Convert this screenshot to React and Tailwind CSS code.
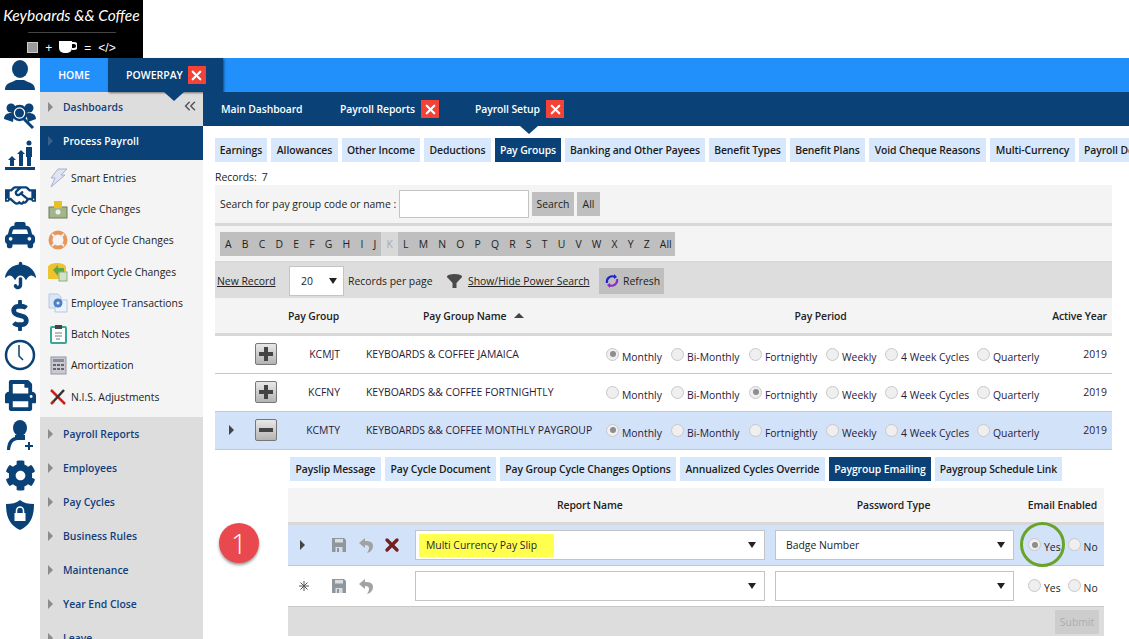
import { FaRegHandshake, FaTaxi, FaUmbrella, FaDollarSign, FaPrint, FaCog } from 'react-icons/fa';
import { X, ChevronsLeft } from 'lucide-react';

const NAVY = '#0a4277';

const railIcons = [
  <svg key="person" viewBox="0 0 30 30" className="w-[30px] h-[30px]" fill={NAVY}>
    <ellipse cx="15" cy="9" rx="8" ry="9" />
    <path d="M0 30c0-5 3-7 7-8l4-2h8l4 2c4 1 7 3 7 8z" />
  </svg>,
  <svg key="users" viewBox="0 0 32 30" className="w-[32px] h-[30px]" fill={NAVY}>
    <circle cx="7" cy="8" r="4.5" />
    <circle cx="25" cy="8" r="4.5" />
    <path d="M0 19c0-4 3-6 7-6l3 1-1 8zM32 19c0-4-3-6-7-6l-3 1 2 8z" />
    <circle cx="15.500" cy="13" r="7" fill="#fff" stroke={NAVY} strokeWidth="2.500" />
    <circle cx="15.500" cy="13" r="4.500" />
    <path d="M20 19l9 9" stroke={NAVY} strokeWidth="3" />
  </svg>,
  <svg key="chart" viewBox="0 0 30 30" className="w-[30px] h-[30px]" fill={NAVY}>
    <path d="M3 20l4-4 4 4H9v6H5v-6zM12 14l4-4 4 4h-2v12h-4V14z" />
    <circle cx="24" cy="3" r="2.500" />
    <path d="M21 7h6v10h-1v9h-4v-9h-1zM0 27h30v3H0z" />
  </svg>,
  <FaRegHandshake key="hands" className="w-[31px] h-[31px]" color={NAVY} />,
  <FaTaxi key="taxi" className="w-[30px] h-[30px]" color={NAVY} />,
  <FaUmbrella key="umbrella" className="w-[31px] h-[31px]" color={NAVY} />,
  <FaDollarSign key="dollar" className="w-[30px] h-[31px]" color={NAVY} />,
  <svg key="clock" viewBox="0 0 32 32" className="w-[32px] h-[32px]" fill="none" stroke={NAVY}>
    <circle cx="16" cy="16" r="14" strokeWidth="2.500" />
    <path d="M15 6v11l4 4" strokeWidth="1.500" />
  </svg>,
  <FaPrint key="print" className="w-[31px] h-[31px]" color={NAVY} />,
  <svg key="userplus" viewBox="0 0 30 31" className="w-[30px] h-[31px]" fill={NAVY}>
    <ellipse cx="15" cy="8" rx="7" ry="8" />
    <path d="M10 15h10v5H14c-5 0-8 2-9 10H2c0-7 3-12 8-13z" />
    <path d="M23 22h2v3h3v2h-3v3h-2v-3h-3v-2h3z" />
  </svg>,
  <FaCog key="cog" className="w-[31px] h-[31px]" color={NAVY} />,
  <svg key="shield" viewBox="0 0 28 30" className="w-[28px] h-[30px]" fill={NAVY}>
    <path d="M14 0c4 3 8 4 14 4 0 12-3 21-14 26C3 25 0 16 0 4c6 0 10-1 14-4z" />
    <rect x="8.500" y="13" width="11" height="8" fill="#fff" />
    <path d="M10.500 13v-2.500a3.500 3.500 0 0 1 7 0V13" fill="none" stroke="#fff" strokeWidth="1.500" />
  </svg>,
];

const subItems = [
  ['Smart Entries', <svg viewBox="0 0 20 20" className="w-[20px] h-[20px]"><path d="M10 1h9l-6 6h4L3 19l4-9H3z" fill="#dfe3f2" stroke="#a9b0cf" /></svg>],
  ['Cycle Changes', <svg viewBox="0 0 20 20" className="w-[20px] h-[20px]"><rect x="1" y="8" width="18" height="11" fill="#a5b58a" stroke="#6d7a58" /><rect x="6" y="2" width="8" height="7" fill="#e8c01f" /><circle cx="10" cy="13" r="2.500" fill="#eee" /></svg>],
  ['Out of Cycle Changes', <svg viewBox="0 0 20 20" className="w-[20px] h-[20px]" fill="none"><circle cx="10" cy="10" r="7.500" stroke="#e8955a" strokeWidth="4" /><path d="M4 4l3 3M16 4l-3 3M4 16l3-3M16 16l-3-3" stroke="#eee" strokeWidth="2" /></svg>],
  ['Import Cycle Changes', <svg viewBox="0 0 20 20" className="w-[20px] h-[20px]"><ellipse cx="9" cy="5" rx="9" ry="4" fill="#eec32e" /><rect y="5" width="18" height="12" fill="#eec32e" /><path d="M5 8l5-5v3h6v5h-6v3z" fill="#5fa84a" /><rect x="11" y="10" width="8" height="9" fill="#cfe3c6" stroke="#8fae86" /></svg>],
  ['Employee Transactions', <svg viewBox="0 0 20 20" className="w-[20px] h-[20px]"><path d="M1 1h9l3 3v11H1z" fill="#dbe7f6" stroke="#b5c9e4" /><path d="M7 7h12v12H7z" fill="#eef3fa" stroke="#b5c9e4" /><circle cx="10" cy="10" r="4.500" fill="#4d80c8" /><circle cx="10" cy="10" r="1.500" fill="#dbe7f6" /></svg>],
  ['Batch Notes', <svg viewBox="0 0 20 20" className="w-[20px] h-[20px]"><rect x="3" y="3" width="15" height="16" rx="1" fill="#fff" stroke="#3aa597" strokeWidth="2" /><rect x="7" y="1" width="7" height="4" fill="#444" /><path d="M7 9h7M7 12h7M8 15h4" stroke="#777" /></svg>],
  ['Amortization', <svg viewBox="0 0 20 20" className="w-[20px] h-[20px]"><rect x="3" y="2" width="15" height="17" fill="#c9c9d3" stroke="#9494a3" /><rect x="5" y="4" width="11" height="3" fill="#8a8a96" /><path d="M5 9h3v2H5zM9 9h3v2H9zM13 9h3v2h-3zM5 13h3v2H5zM9 13h3v2H9zM13 13h3v2h-3z" fill="#666" /></svg>],
  ['N.I.S. Adjustments', <svg viewBox="0 0 20 20" className="w-[20px] h-[20px]" fill="none"><path d="M3 3l14 14" stroke="#c4231c" strokeWidth="2.500" /><path d="M16 3L4 16" stroke="#333" strokeWidth="2.500" /><path d="M3 17l3-3" stroke="#c4231c" strokeWidth="2.500" /></svg>],
];

const lowerMenu = ['Payroll Reports', 'Employees', 'Pay Cycles', 'Business Rules', 'Maintenance', 'Year End Close', 'Leave'];

const setupTabs = [
  { label: 'Earnings', w: 'w-[52px]' },
  { label: 'Allowances', w: 'w-[67px]' },
  { label: 'Other Income', w: 'w-[78px]' },
  { label: 'Deductions', w: 'w-[67px]' },
  { label: 'Pay Groups', w: 'w-[66px]', active: true },
  { label: 'Banking and Other Payees', w: 'w-[140px]' },
  { label: 'Benefit Types', w: 'w-[77px]' },
  { label: 'Benefit Plans', w: 'w-[75px]' },
  { label: 'Void Cheque Reasons', w: 'w-[117px]' },
  { label: 'Multi-Currency', w: 'w-[85px]' },
  { label: 'Payroll De', w: 'w-[60px]', clip: true },
];

const groupTabs = [
  { label: 'Payslip Message', w: 'w-[91px]' },
  { label: 'Pay Cycle Document', w: 'w-[111px]' },
  { label: 'Pay Group Cycle Changes Options', w: 'w-[176px]' },
  { label: 'Annualized Cycles Override', w: 'w-[145px]' },
  { label: 'Paygroup Emailing', w: 'w-[102px]', active: true },
  { label: 'Paygroup Schedule Link', w: 'w-[127px]' },
];

const letters = 'ABCDEFGHIJKLMNOPQRSTUVWXYZ'.split('');

const periods = [
  { label: 'Monthly', w: 'w-[65px]' },
  { label: 'Bi-Monthly', w: 'w-[78px]' },
  { label: 'Fortnightly', w: 'w-[77px]' },
  { label: 'Weekly', w: 'w-[59px]' },
  { label: '4 Week Cycles', w: 'w-[92px]' },
  { label: 'Quarterly', w: 'w-[70px]' },
];

const groups = [
  { code: 'KCMJT', name: 'KEYBOARDS & COFFEE JAMAICA', sel: 0 },
  { code: 'KCFNY', name: 'KEYBOARDS && COFFEE FORTNIGHTLY', sel: 2 },
  { code: 'KCMTY', name: 'KEYBOARDS && COFFEE MONTHLY PAYGROUP', sel: 0, open: true },
];

function Closer() {
  return (
    <span className="w-[18px] h-[18px] bg-[#f44336] flex items-center justify-center shrink-0">
      <X className="w-[15px] h-[15px] text-white" strokeWidth={3.5} />
    </span>
  );
}

function Tri({ className }) {
  return <span className={`w-0 h-0 border-y-[5px] border-y-transparent border-l-[5px] ${className}`} />;
}

function Tab({ tab }) {
  return (
    <div
      className={`${tab.w} h-[24px] shrink-0 flex items-center whitespace-nowrap font-semibold tracking-[-0.1px] ${tab.clip ? 'pl-[5px]' : 'justify-center'} ${
        tab.active ? 'bg-[#0a4277] text-white' : 'bg-[#d8e8fc] text-[#1b1b1b]'
      }`}
    >
      {tab.label}
    </div>
  );
}

function Radio({ on }) {
  return (
    <span className="w-[13px] h-[13px] rounded-full border border-[#c8c8c8] bg-[#efefef] shrink-0 flex items-center justify-center">
      {on && <span className="w-[6px] h-[6px] rounded-full bg-[#8d8d8d]" />}
    </span>
  );
}

function RadioLabel({ label, on, className }) {
  return (
    <div className={`flex items-start gap-[3px] ${className ?? ''}`}>
      <Radio on={on} />
      <span className="mt-[2px] leading-[14px] whitespace-nowrap">{label}</span>
    </div>
  );
}

function SelectBox({ width, children }) {
  return (
    <div className={`${width} h-[30px] bg-white border border-[#c4c4c4] flex items-center justify-between pr-[8px] shrink-0`}>
      <div className="flex items-center h-full">{children}</div>
      <span className="w-0 h-0 border-x-[4px] border-x-transparent border-t-[6px] border-t-[#222]" />
    </div>
  );
}

function PlusMinus({ minus }) {
  return (
    <span className="w-[22px] h-[22px] shrink-0 rounded-[2px] border border-[#777] bg-gradient-to-b from-[#e8e8e8] to-[#b4b4b4] flex items-center justify-center">
      <span className="relative w-[14px] h-[14px] flex items-center justify-center">
        <span className="w-[14px] h-[4px] bg-[#444]" />
        {!minus && <span className="absolute w-[4px] h-[14px] bg-[#444]" />}
      </span>
    </span>
  );
}

function SaveIcon() {
  return (
    <svg viewBox="0 0 14 14" className="w-[14px] h-[14px] shrink-0">
      <path d="M0 0h12l2 2v12H0z" fill="#8f979e" />
      <rect x="3" y="1" width="8" height="3.500" fill="#d8dde2" />
      <rect x="3.500" y="9" width="7" height="5" fill="#d8dde2" />
      <rect x="5" y="10" width="2" height="4" fill="#8f979e" />
    </svg>
  );
}

function UndoIcon() {
  return (
    <svg viewBox="0 0 14 15" className="w-[14px] h-[15px] ml-[13px] shrink-0" fill="#a2a2a2">
      <path d="M6 0L0 5l6 5V7c3 0 4 1 4 3 0 2-1 3-2 5 4-1 6-4 6-7 0-4-3-5-8-5z" />
    </svg>
  );
}

function Logo() {
  return (
    <div className="w-[143px] h-[58px] bg-black text-white flex flex-col items-center shrink-0">
      <div className="font-['Lato',sans-serif] italic text-[15.500px] leading-[22px] mt-[4px] whitespace-nowrap">Keyboards &amp;&amp; Coffee</div>
      <div className="w-[88px] h-px bg-[#444] mt-[6px]" />
      <div className="flex items-center gap-[7px] mt-[8px] text-[12px] leading-[12px] font-['Liberation_Sans',sans-serif]">
        <span className="w-[11px] h-[11px] bg-[#9a9a9a] border border-[#ccc]" />
        <span>+</span>
        <svg viewBox="0 0 18 13" className="w-[18px] h-[13px]" fill="#fff">
          <path d="M0 0h13v7a5 5 0 0 1-5 5H5a5 5 0 0 1-5-5z" />
          <path d="M13 2h2a2.500 2.500 0 0 1 0 6h-2" fill="none" stroke="#fff" strokeWidth="2" />
        </svg>
        <span>=</span>
        <span>&lt;/&gt;</span>
      </div>
    </div>
  );
}

function Sidebar() {
  return (
    <aside className="w-[163px] shrink-0 bg-[#dddddd] font-semibold text-[#123f7c]">
      <div className="h-[34px] flex items-center pl-[8px] pb-[4px] relative">
        <Tri className="border-l-[#8c8c8c]" />
        <span className="ml-[10px]">Dashboards</span>
        <ChevronsLeft className="absolute right-[4px] top-[5px] w-[18px] h-[18px] text-[#555]" strokeWidth={2} />
      </div>
      <div className="h-[34px] flex items-center pl-[8px] pb-[4px] bg-[#0a4277] text-white">
        <Tri className="border-l-[#3b6087]" />
        <span className="ml-[10px]">Process Payroll</span>
      </div>
      <div className="bg-[#f4f4f4] h-[257px] pt-[2px] font-normal text-[#222]">
        {subItems.map(([label, icon]) => (
          <div key={label} className="h-[31.300px] flex items-center pl-[8px] gap-[3px]">
            {icon}
            <span className="whitespace-nowrap">{label}</span>
          </div>
        ))}
      </div>
      {lowerMenu.map((label) => (
        <div key={label} className="h-[34px] flex items-center pl-[8px]">
          <Tri className="border-l-[#8c8c8c]" />
          <span className="ml-[10px]">{label}</span>
        </div>
      ))}
    </aside>
  );
}

function GroupRow({ group }) {
  return (
    <div className={`h-[38px] border-b border-[#c8c8c8] flex items-center pb-[2px] text-[#2a1a3a] ${group.open ? 'bg-[#d2e2f8]' : ''}`}>
      <div className="w-[40px] pl-[14px] flex shrink-0">{group.open && <Tri className="border-l-[#444]" />}</div>
      <PlusMinus minus={group.open} />
      <div className="w-[63px] text-right shrink-0">{group.code}</div>
      <div className="ml-[26px] w-[240px] shrink-0 whitespace-nowrap">{group.name}</div>
      <div className="flex mt-[4px]">
        {periods.map((p, i) => (
          <RadioLabel key={p.label} label={p.label} on={i === group.sel} className={p.w} />
        ))}
      </div>
      <div className="ml-auto pr-[5px]">2019</div>
    </div>
  );
}

function EmailRow({ current, report, password, yes }) {
  return (
    <div className={`h-[41px] border-b border-[#c8c8c8] flex items-center ${current ? 'bg-[#d2e2f8]' : ''}`}>
      <div className="w-[44px] pl-[12px] flex shrink-0">
        {current ? (
          <Tri className="border-l-[#444]" />
        ) : (
          <svg viewBox="0 0 10 10" className="w-[10px] h-[10px] ml-[-1px]" stroke="#555" strokeWidth="1">
            <path d="M5 0v10M0 5h10M1.500 1.500l7 7M8.500 1.500l-7 7" />
          </svg>
        )}
      </div>
      <SaveIcon />
      <UndoIcon />
      <div className="w-[20px] ml-[9px] shrink-0">
        {current && <X className="w-[20px] h-[20px] text-[#74201f]" strokeWidth={4} />}
      </div>
      <div className="ml-[13px]">
        <SelectBox width="w-[350px]">{report}</SelectBox>
      </div>
      <div className="ml-[10px]">
        <SelectBox width="w-[239px]">{password}</SelectBox>
      </div>
      <div className="flex ml-[14px] mt-[2px] gap-[7px]">
        <RadioLabel label="Yes" on={yes} />
        <RadioLabel label="No" />
      </div>
    </div>
  );
}

function PayGroups() {
  return (
    <div className="mt-[7px] mr-[17px] text-[#222]">
      <div className="h-[16px] leading-[16px] flex gap-[5px]"><span>Records:</span><span>7</span></div>

      <div className="h-[38px] bg-[#f4f4f4] border-b-[3px] border-[#d8d8d8] box-content flex items-center pl-[5px]">
        <span className="whitespace-nowrap w-[179px]">Search for pay group code or name :</span>
        <div className="w-[130px] h-[28px] bg-white border border-[#c4c4c4]" />
        <div className="ml-[3px] w-[42px] h-[24px] bg-[#bfbfbf] flex items-center justify-center">Search</div>
        <div className="ml-[3px] w-[23px] h-[24px] bg-[#bfbfbf] flex items-center justify-center">All</div>
      </div>

      <div className="h-[35px] bg-[#f4f4f4] border-b-[2px] border-[#d8d8d8] box-content flex items-center pl-[5px]">
        <div className="h-[24px] w-[455px] bg-[#bfbfbf] flex items-center">
          {letters.map((l) => (
            <span
              key={l}
              className={`h-full px-[5.100px] flex items-center justify-center ${l === 'K' ? 'bg-[#d8d8d8] text-[#aaaaaa]' : ''}`}
            >
              {l}
            </span>
          ))}
          <span className="ml-[5px]">All</span>
        </div>
      </div>

      <div className="h-[35px] bg-[#dddddd] flex items-center pl-[2px]">
        <span className="underline w-[72px]">New Record</span>
        <div className="w-[55px] h-[30px] bg-white border border-[#c4c4c4] flex items-center justify-between pl-[11px] pr-[6px]">
          20
          <span className="w-0 h-0 border-x-[4px] border-x-transparent border-t-[6px] border-t-[#222]" />
        </div>
        <span className="ml-[4px] w-[99px] whitespace-nowrap">Records per page</span>
        <svg viewBox="0 0 15 14" className="w-[15px] h-[14px]" fill="#4a4a4a">
          <ellipse cx="7.500" cy="2.500" rx="7.500" ry="2.500" />
          <path d="M0 3h15L9.500 9v5h-4V9z" />
        </svg>
        <span className="underline ml-[6px] whitespace-nowrap w-[131px]">Show/Hide Power Search</span>
        <div className="w-[65px] h-[26px] bg-[#bfbfbf] flex items-center pl-[6px] gap-[4px]">
          <svg viewBox="0 0 14 14" className="w-[14px] h-[14px]" fill="none" strokeWidth="2.200">
            <path d="M2 9a5.500 5.500 0 0 1 8-6" stroke="#2222cc" />
            <path d="M12 5a5.500 5.500 0 0 1-8 6" stroke="#8a2bc8" />
            <path d="M9 0l3 3-3 2z" fill="#2222cc" />
            <path d="M5 14l-3-3 3-2z" fill="#8a2bc8" />
          </svg>
          Refresh
        </div>
      </div>

      <div className="h-[35px] bg-[#f4f4f4] border-b-[3px] border-[#d8d8d8] box-content flex items-center font-semibold tracking-[-0.1px]">
        <span className="ml-[73px] w-[135px]">Pay Group</span>
        <span className="flex items-center gap-[8px]">
          Pay Group Name
          <span className="w-0 h-0 border-x-[5px] border-x-transparent border-b-[5px] border-b-[#444]" />
        </span>
        <span className="ml-[270px]">Pay Period</span>
        <span className="ml-auto pr-[5px]">Active Year</span>
      </div>

      {groups.map((g) => <GroupRow key={g.code} group={g} />)}

      <div className="flex gap-[4px] mt-[7px] ml-[75px] w-[900px]">
        {groupTabs.map((t) => <Tab key={t.label} tab={t} />)}
      </div>

      <div className="relative mt-[7px] ml-[73px] mr-[8px]">
        <div className="absolute left-[-69px] top-[35px] w-[40px] h-[40px] rounded-full bg-[#e9494e] text-white text-[28px] leading-[40px] text-center font-light shadow-[0_2px_3px_rgba(0,0,0,0.4)]">
          1
        </div>
        <div className="absolute left-[732px] top-[34px] w-[45px] h-[45px] rounded-full border-[3px] border-[#6aa329]" />

        <div className="h-[34px] bg-[#f4f4f4] border-b-[3px] border-[#d8d8d8] box-content flex items-center font-semibold tracking-[-0.1px]">
          <span className="ml-[269px]">Report Name</span>
          <span className="ml-[234px]">Password Type</span>
          <span className="ml-auto pr-[7px]">Email Enabled</span>
        </div>
        <EmailRow
          current
          yes
          report={
            <span className="ml-[3px] h-[23px] w-[135px] bg-[#ffff4d] flex items-center pl-[7px] text-[#2a1a3a]">Multi Currency Pay Slip</span>
          }
          password={<span className="ml-[10px]">Badge Number</span>}
        />
        <EmailRow />
        <div className="h-[29px] bg-[#dddddd] flex items-center justify-end pr-[5px]">
          <div className="w-[44px] h-[24px] bg-[#cdcdcd] text-[#aeaeae] flex items-center justify-center">Submit</div>
        </div>
      </div>
    </div>
  );
}

export default function App() {
  return (
    <div className="w-[1129px] h-[639px] overflow-hidden bg-white font-['Open_Sans',sans-serif] text-[10.400px] leading-[14px]">
      <Logo />
      <div className="flex">
        <div className="w-[40px] shrink-0 mt-[-3px] flex flex-col">
          {railIcons.map((icon) => (
            <div key={icon.key} className="h-[40px] flex items-center justify-center shrink-0">{icon}</div>
          ))}
        </div>
        <div className="flex-1 min-w-0">
          <div className="h-[34px] bg-[#2290fa] flex items-stretch relative font-semibold text-white text-[10.500px]">
            <div className="w-[68px] flex items-center justify-center">HOME</div>
            <div className="w-[115px] bg-[#0a4277] flex items-center pl-[18px] gap-[5px] relative shadow-[1px_1px_2px_rgba(0,0,0,0.5)]">
              POWERPAY
              <Closer />
              <span className="absolute left-[56px] top-[34px] w-0 h-0 border-x-[10px] border-x-transparent border-t-[9px] border-t-[#0a4277] z-10" />
            </div>
          </div>
          <div className="flex">
            <Sidebar />
            <main className="flex-1 min-w-0 overflow-hidden">
              <div className="h-[34px] bg-[#0a4277] text-white font-semibold tracking-[-0.1px] flex items-center pl-[18px] relative">
                <span className="w-[119px]">Main Dashboard</span>
                <span className="w-[75px] whitespace-nowrap">Payroll Reports</span>
                <span className="ml-[6px]"><Closer /></span>
                <span className="ml-[36px] w-[65px] whitespace-nowrap">Payroll Setup</span>
                <span className="ml-[6px]"><Closer /></span>
                <span className="absolute left-[317px] top-[34px] w-0 h-0 border-x-[9px] border-x-transparent border-t-[8px] border-t-[#0a4277]" />
              </div>
              <div className="pl-[12px]">
                <div className="flex gap-[4px] mt-[12px] w-[980px]">
                  {setupTabs.map((t) => <Tab key={t.label} tab={t} />)}
                </div>
                <PayGroups />
              </div>
            </main>
          </div>
        </div>
      </div>
    </div>
  );
}
